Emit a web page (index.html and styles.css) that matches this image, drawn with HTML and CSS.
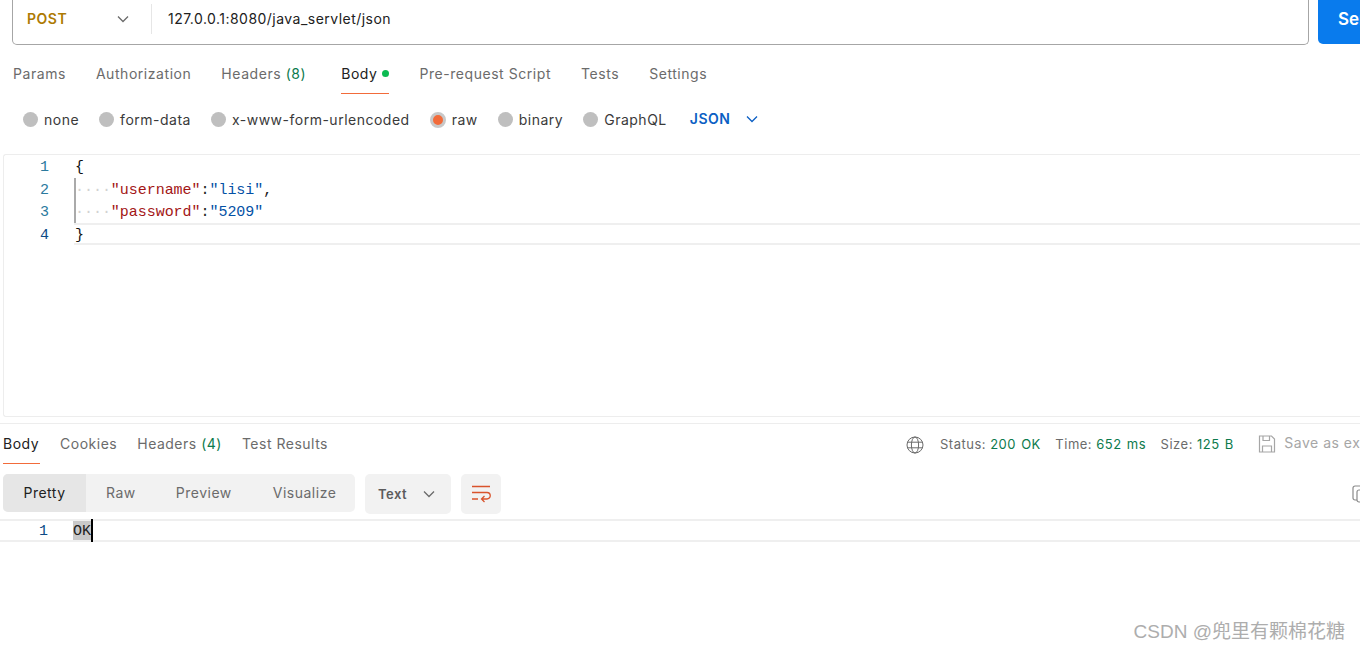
FILE: index.html
```html
<!DOCTYPE html>
<html lang="en">
<head>
<meta charset="utf-8">
<title>Postman request</title>
<link rel="stylesheet" href="styles.css">
</head>
<body>
<div class="page">
  <div class="url-row">
    <div class="url-box">
      <span class="method">POST</span>
      <svg class="chev chev-method" viewBox="0 0 12 8"><path d="M1 1.5l5 5 5-5"/></svg>
      <span class="url-sep"></span>
      <span class="url">127.0.0.1:8080/java_servlet/json</span>
    </div>
    <div class="send">Send</div>
  </div>

  <div class="tabs req-tabs">
    <span class="tab">Params</span>
    <span class="tab">Authorization</span>
    <span class="tab">Headers <em>(8)</em></span>
    <span class="tab active">Body<i class="dot"></i></span>
    <span class="tab">Pre-request Script</span>
    <span class="tab">Tests</span>
    <span class="tab">Settings</span>
  </div>

  <div class="radios">
    <span class="radio"><i></i>none</span>
    <span class="radio"><i></i>form-data</span>
    <span class="radio"><i></i>x-www-form-urlencoded</span>
    <span class="radio on"><i></i>raw</span>
    <span class="radio"><i></i>binary</span>
    <span class="radio"><i></i>GraphQL</span>
    <span class="lang">JSON</span>
    <svg class="chev chev-lang" viewBox="0 0 12 8"><path d="M1 1.5l5 5 5-5"/></svg>
  </div>

  <div class="editor">
    <div class="line"><span class="num">1</span><span class="code"><span class="brace">{</span></span></div>
    <div class="line guide"><span class="num">2</span><span class="code"><span class="ws">····</span><span class="key">"username"</span>:<span class="str">"lisi"</span>,</span></div>
    <div class="line guide"><span class="num">3</span><span class="code"><span class="ws">····</span><span class="key">"password"</span>:<span class="str">"5209"</span></span></div>
    <div class="line current"><span class="num dark">4</span><span class="code"><span class="brace">}</span></span></div>
  </div>

  <div class="resp-head">
    <div class="tabs resp-tabs">
      <span class="tab active">Body</span>
      <span class="tab">Cookies</span>
      <span class="tab">Headers <em>(4)</em></span>
      <span class="tab">Test Results</span>
    </div>
    <div class="stats">
      <svg class="globe" viewBox="0 0 18 18"><circle cx="9" cy="9" r="8"/><ellipse cx="9" cy="9" rx="3.6" ry="8"/><path d="M1.6 6.2h14.8M1.6 11.8h14.8"/></svg>
      <span class="stat">Status: <b>200 OK</b></span>
      <span class="stat">Time: <b>652 ms</b></span>
      <span class="stat">Size: <b>125 B</b></span>
      <svg class="save" viewBox="0 0 18 18"><path d="M1.5 1h12l3 3v13h-15z"/><path d="M5 1v4.5h6.5V1M4.5 17v-6h9v6"/></svg>
      <span class="save-text">Save as example</span>
    </div>
  </div>

  <div class="toolbar">
    <div class="seg">
      <span class="seg-item on">Pretty</span>
      <span class="seg-item raw">Raw</span>
      <span class="seg-item preview">Preview</span>
      <span class="seg-item viz">Visualize</span>
    </div>
    <div class="format">
      <span>Text</span>
      <svg class="chev chev-text" viewBox="0 0 12 8"><path d="M1 1.5l5 5 5-5"/></svg>
    </div>
    <div class="wrap-btn">
      <svg viewBox="0 0 20 18"><path d="M1 1.5h18M1 7.5h15a3 3 0 0 1 0 6.5h-5M1 14h6M13.5 11l-3 3 3 3"/></svg>
    </div>
    <svg class="copy" viewBox="0 0 16 18"><path d="M5 15H3a2 2 0 0 1-2-2V3a2 2 0 0 1 2-2h6"/><rect x="5" y="5" width="11" height="12" rx="2"/></svg>
  </div>

  <div class="output">
    <span class="num">1</span><span class="code"><span class="sel">OK</span><span class="caret"></span></span>
  </div>

  <div class="watermark">CSDN @兜里有颗棉花糖</div>
</div>
</body>
</html>
```
FILE: styles.css
```css
* { box-sizing: border-box; }
html, body { margin: 0; height: 100%; overflow: hidden; background: #fff; }
.page {
  position: relative;
  width: 1360px;
  height: 650px;
  overflow: hidden;
  font: 14px/20px Inter, "Liberation Sans", sans-serif;
  letter-spacing: .5px;
  color: #6b6b6b;
}
em { font-style: normal; color: #0c7a4d; }
.chev { fill: none; stroke: #6b6b6b; stroke-width: 1.3; flex: none; }

/* URL row */
.url-row { display: flex; height: 45px; padding-left: 12px; }
.url-box {
  flex: none;
  width: 1297px;
  height: 45px;
  border: 1px solid #a6a6a6;
  border-top: 0;
  border-radius: 0 0 5px 5px;
  display: flex;
  align-items: center;
  padding: 0 0 6px 14px;
}
.method { width: 91px; font-weight: 600; color: #ad7a03; }
.chev-method { width: 12px; height: 8px; margin-left: -1px; margin-right: 22px; }
.url-sep { width: 1px; height: 30px; background: #e6e6e6; }
.url { margin-left: 16px; color: #212121; letter-spacing: .47px; }
.send {
  flex: none;
  width: 90px;
  height: 44px;
  margin-left: 9px;
  background: #097bed;
  border-radius: 0 0 5px 5px;
  color: #fff;
  font-size: 17px;
  font-weight: 600;
  letter-spacing: 0;
  padding: 9px 0 0 20px;
}

/* Tabs */
.tabs { display: flex; }
.tab { position: relative; display: block; white-space: nowrap; }
.tab.active { color: #212121; }
.tab.active::after {
  content: "";
  position: absolute;
  left: 0;
  right: 0;
  height: 1px;
  background: #f26b3a;
}
.req-tabs { height: 49px; padding: 19px 0 0 13px; gap: 30px; letter-spacing: .55px; }
.req-tabs .tab.active { margin-left: 5px; }
.req-tabs .tab.active::after { top: 29px; }
.dot {
  display: inline-block;
  width: 7px;
  height: 7px;
  margin: 0 0 2px 5px;
  border-radius: 50%;
  background: #0cbb52;
}

/* Body type radios */
.radios { display: flex; align-items: center; height: 50px; padding: 1px 0 0 23px; color: #3a3a3a; }
.radio { display: flex; align-items: center; margin-right: 20px; white-space: nowrap; }
.radio i {
  flex: none;
  width: 15px;
  height: 15px;
  margin-right: 6px;
  border-radius: 50%;
  background: #bfbfbf;
}
.radio.on i { background: #f26b3a; border: 3px solid #c8c8c8; width: 16px; height: 16px; }
.lang { margin: -2px 0 0 3px; font-weight: 600; color: #0b5fc4; }
.chev-lang { width: 12px; height: 8px; margin: -1px 0 0 16px; stroke: #0b5fc4; }

/* Editor */
.editor {
  margin: 10px 0 0 3px;
  height: 263px;
  border: 1px solid #ededed;
  border-right: 0;
  border-radius: 3px 0 0 3px;
  font: 15px/26.5px "Liberation Mono", monospace;
  letter-spacing: 0;
  color: #212121;
}
.line { display: flex; height: 22.5px; }
.num { width: 45px; flex: none; text-align: right; color: #2b7a9e; }
.num.dark { color: #0d4a86; }
.code { display: block; margin-left: 25px; white-space: pre; flex: 1; letter-spacing: -.04px; }
.guide .code { box-shadow: inset 2px 0 0 #aaa; padding-left: 1px; }
.line:first-child .code, .current .code { padding-left: 1px; }
.current .code { border-top: 2px solid #efefef; border-bottom: 2px solid #efefef; height: 22px; line-height: 22px; }
.ws { color: #d2d2d2; }
.key { color: #a31515; }
.str { color: #0451a5; }
.brace { color: #111; }

/* Response header */
.resp-head {
  display: flex;
  justify-content: space-between;
  height: 51px;
  margin-top: 6px;
  border-top: 1px solid #ededed;
  padding: 10px 0 0 3px;
}
.resp-tabs { gap: 20px; }
.resp-tabs .tab.active { padding-right: 1px; }
.resp-tabs .tab.active::after { top: 29px; }
.stats { display: flex; align-items: flex-start; width: 454px; flex: none; font-size: 13px; white-space: nowrap; }
.stat { margin-right: 14.5px; }
.stat b { font-weight: 400; color: #0c7a4d; word-spacing: 1px; }
.globe { width: 18px; height: 18px; margin: 2px 16px 0 0; fill: none; stroke: #6b6b6b; stroke-width: 1; flex: none; }
.save { width: 18px; height: 18px; margin: 1px 8px 0 10px; fill: none; stroke: #a6a6a6; stroke-width: 1.2; flex: none; }
.save-text { color: #a6a6a6; font-size: 14px; margin-top: -1px; }

/* Response toolbar */
.toolbar { position: relative; display: flex; height: 45px; padding: 0 0 0 3px; }
.seg {
  display: flex;
  align-items: center;
  width: 352px;
  height: 38px;
  border-radius: 5px;
  background: #f2f2f2;
}
.seg-item { display: block; }
.seg-item.on {
  width: 83px;
  height: 38px;
  line-height: 38px;
  text-align: center;
  border-radius: 5px 0 0 5px;
  background: #e6e6e6;
  color: #212121;
}
.raw { margin-left: 20px; }
.preview { margin-left: 40px; }
.viz { margin-left: 41px; }
.format {
  display: flex;
  align-items: center;
  width: 86px;
  height: 40px;
  margin-left: 10px;
  padding-left: 13px;
  border-radius: 5px;
  background: #f2f2f2;
  font-weight: 600;
  font-size: 13px;
  color: #5c5c5c;
}
.chev-text { width: 12px; height: 8px; margin-left: 16px; }
.wrap-btn {
  display: flex;
  align-items: center;
  justify-content: center;
  width: 40px;
  height: 40px;
  margin-left: 10px;
  border-radius: 5px;
  background: #f2f2f2;
}
.wrap-btn svg { width: 20px; height: 18px; fill: none; stroke: #d9532c; stroke-width: 1.3; }
.copy { position: absolute; left: 1352px; top: 11px; width: 16px; height: 18px; fill: none; stroke: #8a8a8a; stroke-width: 1.2; }

/* Output */
.output {
  display: flex;
  height: 23px;
  border-top: 2px solid #efefef;
  border-bottom: 2px solid #efefef;
  font: 15px/21px "Liberation Mono", monospace;
  letter-spacing: 0;
  color: #212121;
}
.output .num { width: 48px; color: #0d4a86; }
.output .code { margin-left: 25px; flex: 1; }
.sel { display: inline-block; height: 19px; vertical-align: top; background: #c9c9c9; }
.caret { display: inline-block; width: 2px; height: 23px; margin-top: -2px; vertical-align: top; background: #000; }

.watermark {
  position: absolute;
  right: 15px;
  top: 620px;
  font: 19px/24px "Liberation Sans", "Noto Sans CJK SC", sans-serif;
  letter-spacing: 0;
  color: #adadad;
}
```
